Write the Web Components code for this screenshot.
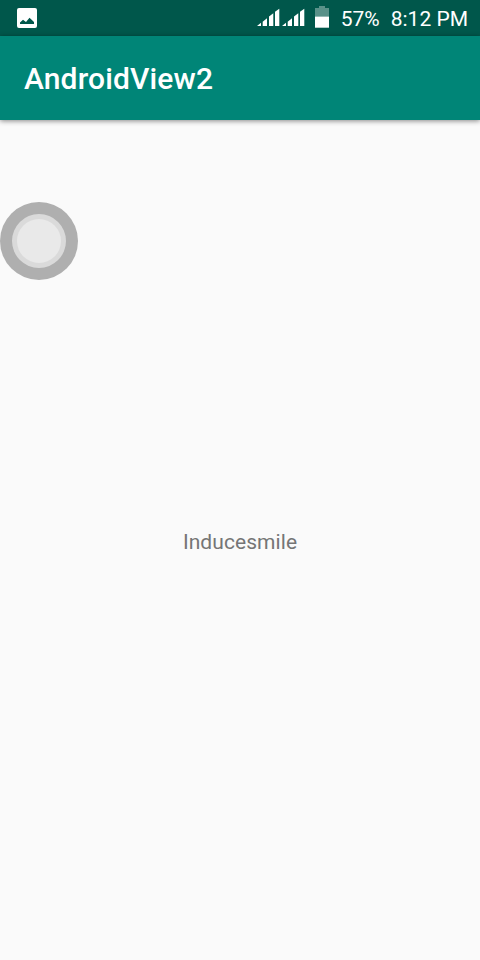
<!DOCTYPE html>
<html lang="en"><head><meta charset="utf-8"><title>AndroidView2</title>
<style>html,body{margin:0;height:100%;background:#fafafa;overflow:hidden}</style></head><body>
<android-screen></android-screen>
<script>
const define = (name, html) => customElements.define(name, class extends HTMLElement {
  constructor(){ super(); this.attachShadow({mode:'open'}).innerHTML = html; }
});
define('status-bar', `<style>
:host{display:flex;align-items:center;justify-content:space-between;box-sizing:border-box;height:36px;padding:0 12px 0 17px;background:#00574b;color:#fff;font:21px/36px Roboto,sans-serif}
.right{display:flex;align-items:center;white-space:pre}
svg{display:block}span{padding-top:2px;line-height:34px;margin-left:11px}
</style>
<svg width="20" height="36" viewBox="0 0 20 36"><path fill="#fff" fill-rule="evenodd" d="M2 8H18Q20 8 20 10V26Q20 28 18 28H2Q0 28 0 26V10Q0 8 2 8ZM3 24H17V22L12.5 17.8L9 22L6 19.8L3 22.5Z"/></svg>
<div class="right"><svg width="73" height="36" viewBox="257 0 73 36"><g fill="#fff"><path d="M257 26l4-3.3v3.3zM262.7 26v-4.3l4.3-3.4v7.7zM269 26v-9.4l4.3-3.4v12.8zM275 26v-14.2l4.3-3.1v17.3z"/><path transform="translate(25)" d="M257 26l4-3.3v3.3zM262.7 26v-4.3l4.3-3.4v7.7zM269 26v-9.4l4.3-3.4v12.8zM275 26v-14.2l4.3-3.1v17.3z"/><path opacity=".35" d="M319 6h6v2h4v8.500h-14V8h4z"/><path d="M315 16.500h14v11.200h-14z"/></g></svg><span>57%</span><span>8:12 PM</span></div>`);
define('app-bar', `<style>:host{display:flex;align-items:center;box-sizing:border-box;height:84px;padding:2px 24px 0;background:#008577;color:#fff;font:500 30px/36px Roboto,sans-serif;letter-spacing:.14px;box-shadow:0 1px 5px #0007}</style><slot></slot>`);
define('assistive-button', `<style>:host{display:block;width:78px;height:78px}svg{display:block}</style><svg width="78" height="78"><circle cx="39" cy="39" r="39" fill="#afafaf"/><circle cx="39" cy="39" r="27" fill="#dadada"/><circle cx="39" cy="39" r="22" fill="#e9e9e9"/></svg>`);
define('android-screen', `<style>:host{display:flex;flex-direction:column;position:relative;width:480px;height:960px;background:#fafafa}
main{flex:1;display:grid;place-items:center;padding-top:4px;color:#757575;font:21px/28px Roboto,sans-serif;letter-spacing:.07px}
assistive-button{position:absolute;left:0;top:202px}</style>
<status-bar></status-bar><app-bar>AndroidView2</app-bar><main><span>Inducesmile</span></main><assistive-button></assistive-button>`);
</script></body></html>
